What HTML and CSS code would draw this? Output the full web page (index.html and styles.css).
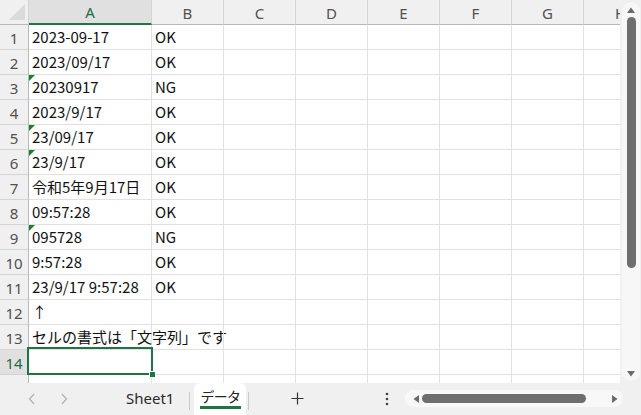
FILE: index.html
```html
<!DOCTYPE html>
<html lang="ja">
<head>
<meta charset="utf-8">
<link rel="stylesheet" href="styles.css">
</head>
<body>
<div class="app">
  <div class="main">
    <div class="sheet">
      <div class="grid">
        <div class="hd corner"><span class="tri"></span></div>
        <div class="hd col sel">A</div>
        <div class="hd col">B</div>
        <div class="hd col">C</div>
        <div class="hd col">D</div>
        <div class="hd col">E</div>
        <div class="hd col">F</div>
        <div class="hd col">G</div>
        <div class="hd col last">H</div>

        <div class="rh">1</div><div class="c">2023-09-17</div><div class="c">OK</div><div class="c"></div><div class="c"></div><div class="c"></div><div class="c"></div><div class="c"></div><div class="c last"></div>
        <div class="rh">2</div><div class="c">2023/09/17</div><div class="c">OK</div><div class="c"></div><div class="c"></div><div class="c"></div><div class="c"></div><div class="c"></div><div class="c last"></div>
        <div class="rh">3</div><div class="c warn">20230917</div><div class="c">NG</div><div class="c"></div><div class="c"></div><div class="c"></div><div class="c"></div><div class="c"></div><div class="c last"></div>
        <div class="rh">4</div><div class="c">2023/9/17</div><div class="c">OK</div><div class="c"></div><div class="c"></div><div class="c"></div><div class="c"></div><div class="c"></div><div class="c last"></div>
        <div class="rh">5</div><div class="c warn">23/09/17</div><div class="c">OK</div><div class="c"></div><div class="c"></div><div class="c"></div><div class="c"></div><div class="c"></div><div class="c last"></div>
        <div class="rh">6</div><div class="c warn">23/9/17</div><div class="c">OK</div><div class="c"></div><div class="c"></div><div class="c"></div><div class="c"></div><div class="c"></div><div class="c last"></div>
        <div class="rh">7</div><div class="c">令和5年9月17日</div><div class="c">OK</div><div class="c"></div><div class="c"></div><div class="c"></div><div class="c"></div><div class="c"></div><div class="c last"></div>
        <div class="rh">8</div><div class="c">09:57:28</div><div class="c">OK</div><div class="c"></div><div class="c"></div><div class="c"></div><div class="c"></div><div class="c"></div><div class="c last"></div>
        <div class="rh">9</div><div class="c warn">095728</div><div class="c">NG</div><div class="c"></div><div class="c"></div><div class="c"></div><div class="c"></div><div class="c"></div><div class="c last"></div>
        <div class="rh">10</div><div class="c">9:57:28</div><div class="c">OK</div><div class="c"></div><div class="c"></div><div class="c"></div><div class="c"></div><div class="c"></div><div class="c last"></div>
        <div class="rh">11</div><div class="c">23/9/17 9:57:28</div><div class="c">OK</div><div class="c"></div><div class="c"></div><div class="c"></div><div class="c"></div><div class="c"></div><div class="c last"></div>
        <div class="rh">12</div><div class="c">↑</div><div class="c"></div><div class="c"></div><div class="c"></div><div class="c"></div><div class="c"></div><div class="c"></div><div class="c last"></div>
        <div class="rh">13</div><div class="c">セルの書式は「文字列」です</div><div class="c"></div><div class="c"></div><div class="c"></div><div class="c"></div><div class="c"></div><div class="c"></div><div class="c last"></div>
        <div class="rh sel">14</div><div class="c"></div><div class="c"></div><div class="c"></div><div class="c"></div><div class="c"></div><div class="c"></div><div class="c"></div><div class="c last"></div>
        <div class="rh">15</div><div class="c"></div><div class="c"></div><div class="c"></div><div class="c"></div><div class="c"></div><div class="c"></div><div class="c"></div><div class="c last"></div>
      </div>
      <div class="selection"><span class="handle"></span></div>
    </div>
    <div class="vscroll">
      <div class="vtrack">
        <svg class="arr" width="10" height="8" viewBox="0 0 10 8"><path d="M1 7 L5 1.5 L9 7 Z" fill="#6b6b6b"/></svg>
        <div class="vthumb"></div>
        <div class="vspace"></div>
        <svg class="arr" width="10" height="8" viewBox="0 0 10 8"><path d="M1 1 L5 6.5 L9 1 Z" fill="#6b6b6b"/></svg>
      </div>
    </div>
  </div>
  <div class="tabbar">
    <div class="navs">
      <svg width="10" height="14" viewBox="0 0 10 14"><path d="M7 2 L2.5 7 L7 12" fill="none" stroke="#b4b4b4" stroke-width="1.3"/></svg>
      <svg width="10" height="14" viewBox="0 0 10 14"><path d="M3 2 L7.5 7 L3 12" fill="none" stroke="#b4b4b4" stroke-width="1.3"/></svg>
    </div>
    <div class="tab">Sheet1</div>
    <div class="sep"></div>
    <div class="tab active"><span class="tlabel">データ</span></div>
    <div class="sep"></div>
    <div class="plus">
      <svg width="13" height="13" viewBox="0 0 13 13"><path d="M6.5 0.5 V12.5 M0.5 6.5 H12.5" stroke="#333" stroke-width="1.2"/></svg>
    </div>
    <div class="more">
      <svg width="4" height="16" viewBox="0 0 4 16"><circle cx="2" cy="3" r="1.3" fill="#444"/><circle cx="2" cy="8" r="1.3" fill="#444"/><circle cx="2" cy="13" r="1.3" fill="#444"/></svg>
    </div>
    <div class="hscroll">
      <svg class="harr" width="8" height="10" viewBox="0 0 8 10"><path d="M7 1 L1.5 5 L7 9 Z" fill="#6b6b6b"/></svg>
      <div class="hthumb"></div>
      <div class="hspace"></div>
      <svg class="harr" width="8" height="10" viewBox="0 0 8 10"><path d="M1 1 L6.5 5 L1 9 Z" fill="#6b6b6b"/></svg>
    </div>
  </div>
</div>
</body>
</html>
```

FILE: styles.css
```css
* { box-sizing: border-box; }
html, body { margin: 0; padding: 0; }
body {
  width: 641px;
  height: 415px;
  overflow: hidden;
  background: #f0f0f0;
  font-family: "Noto Sans CJK JP", "Noto Sans", sans-serif;
}
.app {
  width: 641px;
  height: 415px;
  display: flex;
  flex-direction: column;
}
.main {
  height: 383px;
  display: flex;
}
.sheet {
  position: relative;
  width: 620px;
  height: 383px;
  overflow: hidden;
  background: #fff;
}
.grid {
  display: grid;
  grid-template-columns: 29px 123px repeat(6, 72px) 36px;
  grid-auto-rows: 25px;
}
.hd {
  background: #f0f0f0;
  border-right: 1px solid #d4d4d4;
  border-bottom: 1px solid #b8b8b8;
  display: flex;
  align-items: center;
  justify-content: center;
  font-family: "Noto Sans", sans-serif;
  font-size: 15px;
  color: #505050;
  padding-top: 1px;
}
.hd.last { border-right: none; justify-content: flex-start; padding-left: 31px; }
.hd.sel {
  background: #e0e0e0;
  color: #1c6b45;
  border-bottom: 2px solid #217346;
}
.corner { position: relative; }
.tri {
  position: absolute;
  right: 3px;
  bottom: 4px;
  width: 0;
  height: 0;
  border-left: 16px solid transparent;
  border-bottom: 16px solid #dadada;
}
.rh {
  background: #f0f0f0;
  border-right: 1px solid #b8b8b8;
  border-bottom: 1px solid #d4d4d4;
  display: flex;
  align-items: center;
  justify-content: center;
  font-family: "Noto Sans", sans-serif;
  font-size: 15px;
  color: #505050;
  padding-top: 1px;
}
.rh.sel { background: #e0e0e0; color: #1c6b45; }
.c {
  position: relative;
  border-right: 1px solid #e1e1e1;
  border-bottom: 1px solid #e1e1e1;
  font-size: 15px;
  color: #111;
  white-space: nowrap;
  padding-left: 3px;
  line-height: 24px;
  overflow: visible;
}
.c.last { border-right: none; }
.warn::before {
  content: "";
  position: absolute;
  left: 0;
  top: 0;
  width: 0;
  height: 0;
  border-top: 6px solid #1a7f2a;
  border-right: 6px solid transparent;
}
.selection {
  position: absolute;
  left: 27px;
  top: 347px;
  width: 126px;
  height: 28px;
  border: 2px solid #217346;
}
.handle {
  position: absolute;
  right: -5px;
  bottom: -5px;
  width: 7px;
  height: 7px;
  background: #217346;
  border: 1px solid #fff;
}
.vscroll {
  width: 21px;
  height: 383px;
  background: #f0f0f0;
  padding: 2px 1px 2px 2px;
}
.vtrack {
  height: 100%;
  background: #f7f7f7;
  border-radius: 9px;
  display: flex;
  flex-direction: column;
  align-items: center;
  padding: 4px 0 3px;
}
.arr { flex: none; }
.vthumb {
  width: 9px;
  height: 251px;
  margin-top: 3px;
  background: #6e6e6e;
  border-radius: 5px;
}
.vspace { flex: 1; }
.tabbar {
  height: 32px;
  display: flex;
  align-items: stretch;
  background: #f0f0f0;
  font-family: "Noto Sans", "Noto Sans CJK JP", sans-serif;
  white-space: nowrap;
}
.navs {
  flex: none;
  width: 115px;
  display: flex;
  align-items: center;
  gap: 22px;
  padding-left: 27px;
}
.tab {
  flex: none;
  display: flex;
  align-items: center;
  padding: 0 11px 2px;
  font-size: 15px;
  color: #2b2b2b;
}
.tab.active {
  background: #fff;
  border-radius: 6px 6px 0 0;
  width: 52px;
  padding: 0;
  justify-content: center;
  align-items: flex-start;
}
.tlabel {
  font-family: "Noto Sans CJK JP", sans-serif;
  font-feature-settings: "palt";
  font-size: 14px;
  color: #222;
  border-bottom: 3px solid #217346;
  padding: 0 1px;
  line-height: 19px;
  margin-top: 4px;
}
.sep {
  flex: none;
  width: 1px;
  background: #c8c8c8;
  margin: 9px 4px 5px;
}
.tab.active + .sep { margin-left: 2px; }
.plus {
  flex: none;
  width: 88px;
  display: flex;
  align-items: center;
  justify-content: center;
  padding-bottom: 2px;
}
.more {
  flex: none;
  width: 30px;
  margin-left: 31px;
  display: flex;
  align-items: center;
  justify-content: center;
  padding-bottom: 1px;
}
.hscroll {
  flex: none;
  margin: 7px 0 8px 3px;
  width: 218px;
  background: #f8f8f8;
  border-radius: 9px;
  display: flex;
  align-items: center;
  padding: 0 4px 0 7px;
}
.harr { flex: none; }
.hthumb {
  width: 164px;
  height: 9px;
  margin-left: 2px;
  background: #6e6e6e;
  border-radius: 5px;
}
.hspace { flex: 1; }
```
